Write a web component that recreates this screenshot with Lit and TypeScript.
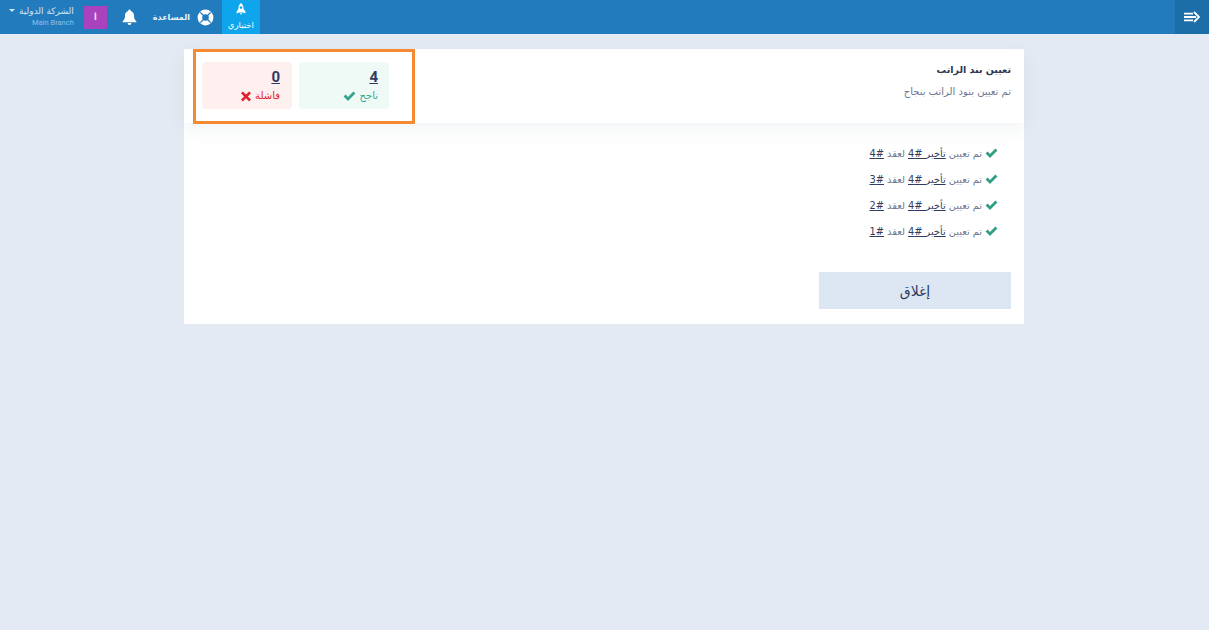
import { LitElement, html, css, svg } from "lit";
import { customElement } from "lit/decorators.js";

const check = svg`<path d="M0.6 6.6 L2.6 4.6 L5 7 L10.4 1.6 L12.4 3.6 L5 11 Z" fill="currentColor"/>`;
const cross = svg`<path d="M2 0.4 L5.5 3.9 L9 0.4 L11 2.4 L7.5 5.9 L11 9.4 L9 11.4 L5.5 7.9 L2 11.4 L0 9.4 L3.5 5.9 L0 2.4 Z" fill="currentColor"/>`;

@customElement("app-root")
export class AppRoot extends LitElement {
  static styles = css`
    :host {
      display: block;
      min-height: 630px;
      background: #e4eaf3;
      font-family: "DejaVu Sans", "Noto Sans", sans-serif;
      color: #2f3a5f;
    }
    * { box-sizing: border-box; }
    .topbar {
      display: flex;
      height: 34px;
      background: #217bbd;
      color: #fff;
      align-items: stretch;
    }
    .toggle {
      width: 34px;
      background: #1c6ea9;
      display: flex;
      align-items: center;
      justify-content: center;
    }
    .toggle svg { width: 16px; height: 12px; }
    .tools {
      margin-inline-start: auto;
      display: flex;
      align-items: stretch;
    }
    .tab {
      width: 38px;
      background: #0ea5ec;
      display: flex;
      flex-direction: column;
      align-items: center;
      justify-content: space-between;
      padding: 3px 0 4px;
      font-size: 8.5px;
      line-height: 10px;
      white-space: nowrap;
    }
    .tab svg { width: 10px; height: 12px; }
    .help {
      display: flex;
      align-items: center;
      gap: 7px;
      margin-inline-start: 8px;
      font-size: 8px;
      font-weight: 700;
      color: #eaf3fa;
      white-space: nowrap;
    }
    .help svg { width: 17px; height: 17px; }
    .bell {
      display: flex;
      align-items: center;
      margin-inline-start: 16px;
    }
    .bell svg { width: 15px; height: 16px; }
    .avatar {
      align-self: center;
      width: 23px;
      height: 23px;
      margin-inline-start: 15px;
      background: #a943bd;
      display: flex;
      align-items: center;
      justify-content: center;
      font-size: 8px;
      font-weight: 700;
      color: #f3e3f6;
    }
    .company {
      display: flex;
      flex-direction: column;
      justify-content: center;
      gap: 1px;
      padding-bottom: 2px;
      margin-inline-start: 10px;
      margin-inline-end: 9px;
      white-space: nowrap;
    }
    .company .name {
      display: flex;
      align-items: center;
      gap: 4px;
      font-size: 9px;
      line-height: 12px;
      color: #d7e6f3;
    }
    .caret {
      width: 0;
      height: 0;
      border-left: 3px solid transparent;
      border-right: 3px solid transparent;
      border-top: 3px solid #d7e6f3;
    }
    .company .branch {
      direction: ltr;
      text-align: right;
      font-family: "Roboto", sans-serif;
      font-size: 7.5px;
      line-height: 10px;
      color: #8fc0e6;
    }
    .main {
      display: flex;
      justify-content: center;
      padding-top: 15px;
      padding-inline-start: 1px;
    }
    .card {
      width: 840px;
      height: 275px;
      background: #fff;
      display: flex;
      flex-direction: column;
    }
    .head {
      height: 74px;
      display: flex;
      justify-content: space-between;
      align-items: stretch;
      padding-inline-start: 13px;
      padding-inline-end: 9px;
      box-shadow: 0 6px 18px rgba(60, 80, 120, 0.07);
    }
    .title { padding-top: 14px; white-space: nowrap; }
    .title h1 {
      margin: 0;
      font-size: 9.5px;
      line-height: 14px;
      font-weight: 700;
      color: #2f3650;
    }
    .title p {
      margin: 9px 0 0;
      font-size: 10px;
      line-height: 12px;
      color: #6f7590;
    }
    .stats {
      width: 222px;
      height: 75px;
      border: 3px solid #f58a33;
      display: flex;
      gap: 7px;
      padding: 10px 23px 0 0;
      flex: none;
    }
    .stat {
      width: 90px;
      height: 47px;
      border-radius: 4px;
      padding: 5px 11px 0 11px;
    }
    .stat.ok { background: #effaf7; color: #34a58a; }
    .stat.bad { background: #fdf0ef; color: #e0202f; padding-inline-start: 12px; }
    .stat .num {
      font-family: "Roboto", sans-serif;
      font-size: 15px;
      line-height: 20px;
      font-weight: 700;
      color: #2f3a5f;
      text-decoration: underline;
    }
    .stat .label {
      display: flex;
      align-items: center;
      gap: 4px;
      margin-top: 3px;
      font-size: 10px;
      line-height: 12px;
    }
    .stat svg { width: 13px; height: 12px; }
    .stat.bad svg { width: 10px; height: 11px; }
    .list {
      list-style: none;
      margin: 0;
      padding: 17px 26px 0 0;
      flex: 1;
    }
    .list li {
      display: flex;
      align-items: center;
      gap: 3px;
      height: 26px;
      font-size: 9.8px;
      color: #6f7590;
    }
    .list li svg { width: 13px; height: 12px; color: #2f9e84; }
    .list a {
      color: #2f3a5f;
      text-decoration: underline;
    }
    .footer { padding: 0 13px 15px; }
    .close {
      display: block;
      width: 192px;
      height: 37px;
      border: 0;
      padding: 0;
      background: #dce7f3;
      color: #2f3a5f;
      font-family: inherit;
      font-size: 14px;
    }
  `;

  render() {
    return html`
      <div dir="rtl">
        <header class="topbar">
          <div class="toggle">
            <svg viewBox="0 0 16 12"><path d="M0 2.6h9M0 6h12M0 9.4h9" stroke="#fff" stroke-width="1.8" fill="none"/><path d="M10 1 L15 6 L10 11" stroke="#fff" stroke-width="1.8" fill="none"/></svg>
          </div>
          <div class="tools">
            <div class="tab">
              <svg viewBox="0 0 10 12"><path fill-rule="evenodd" d="M5 0 C7 1.5 7.6 3.5 7.6 6 L9.4 8.6 V10.6 L7 9.4 H3 L0.6 10.6 V8.6 L2.4 6 C2.4 3.5 3 1.5 5 0 Z M5 3.2 a1.3 1.3 0 1 0 0.01 0 Z M4 10 H6 L5 12 Z" fill="#fff"/></svg>
              <span>اختباري</span>
            </div>
            <div class="help">
              <svg viewBox="0 0 17 17"><circle cx="8.5" cy="8.5" r="5.6" fill="none" stroke="#fff" stroke-width="4.6"/><path d="M3.4 3.4 L6.2 6.2 M13.6 3.4 L10.8 6.2 M3.4 13.6 L6.2 10.8 M13.6 13.6 L10.8 10.8" stroke="#217bbd" stroke-width="1.3"/></svg>
              <span>المساعدة</span>
            </div>
            <div class="bell">
              <svg viewBox="0 0 15 16"><path d="M7.5 0.5 a1.3 1.3 0 0 1 1.3 1.5 C11 2.6 12 4.4 12 6.6 C12 9.6 12.8 11 14.4 12.4 V13.2 H0.6 V12.4 C2.2 11 3 9.6 3 6.6 C3 4.4 4 2.6 6.2 2 A1.3 1.3 0 0 1 7.5 0.5 Z M5.6 14 H9.4 A1.9 1.9 0 0 1 5.6 14 Z" fill="#fff"/></svg>
            </div>
            <div class="avatar">أ</div>
            <div class="company">
              <div class="name"><span>الشركة الدولية</span><i class="caret"></i></div>
              <div class="branch">Main Branch</div>
            </div>
          </div>
        </header>
        <main class="main">
          <section class="card">
            <div class="head">
              <div class="title">
                <h1>تعيين بند الراتب</h1>
                <p>تم تعيين بنود الراتب بنجاح</p>
              </div>
              <div class="stats">
                <div class="stat ok">
                  <div class="num">4</div>
                  <div class="label"><span>ناجح</span><svg viewBox="0 0 13 12">${check}</svg></div>
                </div>
                <div class="stat bad">
                  <div class="num">0</div>
                  <div class="label"><span>فاشلة</span><svg viewBox="0 0 11 12">${cross}</svg></div>
                </div>
              </div>
            </div>
            <ul class="list">
              ${[4, 3, 2, 1].map(
                (n) => html`<li>
                  <svg viewBox="0 0 13 12">${check}</svg>
                  <span>تم تعيين <a>تأخير #4</a> لعقد <a>#${n}</a></span>
                </li>`
              )}
            </ul>
            <div class="footer"><button class="close">إغلاق</button></div>
          </section>
        </main>
      </div>
    `;
  }
}
